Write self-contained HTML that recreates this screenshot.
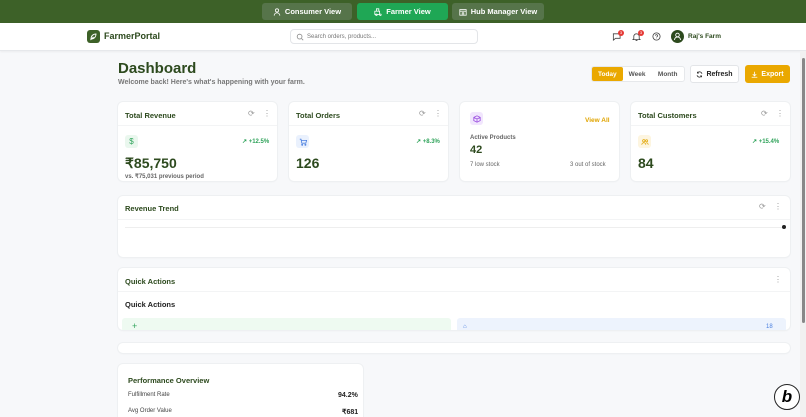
<!DOCTYPE html>
<html><head><meta charset="utf-8"><style>
*{box-sizing:border-box;margin:0;padding:0}
html,body{width:806px;height:417px;overflow:hidden}
body{background:#f7f8fa;font-family:"Liberation Sans",sans-serif;position:relative;color:#222}
.abs{position:absolute}
.top{left:0;top:0;width:806px;height:23px;background:#3d6128}
.tb{top:3px;height:17px;border-radius:3px;color:#fff;font-size:7.5px;font-weight:bold;display:flex;align-items:center;justify-content:center;gap:4px;background:#56744a}
.hdr{left:0;top:23px;width:806px;height:28px;background:#fff;border-bottom:1px solid #e6e8eb;box-shadow:0 1px 2px rgba(0,0,0,.05)}
.card{background:#fff;border-radius:5px;box-shadow:0 0 0 1px #eef0f2,0 1px 2px rgba(0,0,0,.04)}
.ct{font-size:7.5px;font-weight:bold;color:#2d4a1e}
.big{font-size:14px;font-weight:bold;color:#2d4a1e}
.g{color:#2fa35a;font-size:6px;font-weight:bold}
.ico{width:13px;height:13px;border-radius:3px;display:flex;align-items:center;justify-content:center;font-size:8px}
.sm{font-size:6px;color:#666}
.dots{font-size:8px;color:#999}
</style></head><body>
<div class="abs top"></div>
<div class="abs tb" style="left:262px;width:90px">
<svg width="8" height="8" viewBox="0 0 10 10" fill="none" stroke="#fff" stroke-width="1"><circle cx="5" cy="3" r="2"/><path d="M1.5 9.5c0-2 1.5-3.5 3.5-3.5s3.5 1.5 3.5 3.5"/></svg>Consumer View</div>
<div class="abs tb" style="left:357px;width:91px;background:#1fa755">
<svg width="8" height="8" viewBox="0 0 10 10" fill="none" stroke="#fff" stroke-width="1"><rect x="1" y="4" width="6" height="4"/><circle cx="3" cy="8.5" r="1"/><circle cx="8" cy="8.5" r="1"/><path d="M3 4V1h3v3"/></svg>Farmer View</div>
<div class="abs tb" style="left:452px;width:92px">
<svg width="8" height="8" viewBox="0 0 10 10" fill="none" stroke="#fff" stroke-width="1"><rect x="1" y="2" width="8" height="7"/><path d="M1 4h8M4 9V6h2v3"/></svg>Hub Manager View</div>

<div class="abs hdr"></div>
<div class="abs" style="left:87px;top:30px;width:13px;height:13px;background:#3d6128;border-radius:3px"><svg width="13" height="13" viewBox="0 0 13 13" fill="none" stroke="#fff" stroke-width="0.9"><path d="M4 9c0-3 2-5 5-5 0 3-2 5-5 5zM3.5 10l3-3"/></svg></div>
<div class="abs" style="left:104px;top:31px;font-size:9px;font-weight:bold;color:#2d4a1e">FarmerPortal</div>
<div class="abs" style="left:290px;top:29px;width:188px;height:15px;border:1px solid #e3e5e8;border-radius:4px;font-size:6px;color:#777;padding:4px 0 0 16px">Search orders, products...
<svg class="abs" style="left:5px;top:3px" width="8" height="8" viewBox="0 0 10 10" fill="none" stroke="#888" stroke-width="1"><circle cx="4.5" cy="4.5" r="3"/><path d="M7 7l2 2"/></svg></div>
<svg class="abs" style="left:612px;top:32px" width="9" height="9" viewBox="0 0 10 10" fill="none" stroke="#444" stroke-width="0.9"><path d="M1 2h8v5H4L1.5 9V2z"/></svg>
<div class="abs" style="left:618px;top:30px;width:6px;height:6px;border-radius:50%;background:#e53935;font-size:4px;color:#fff;text-align:center;line-height:6px">3</div>
<svg class="abs" style="left:632px;top:32px" width="9" height="9" viewBox="0 0 10 10" fill="none" stroke="#444" stroke-width="0.9"><path d="M2 7.5V5a3 3 0 016 0v2.5l1 1H1zM4 9.5h2"/></svg>
<div class="abs" style="left:638px;top:30px;width:6px;height:6px;border-radius:50%;background:#e53935;font-size:4px;color:#fff;text-align:center;line-height:6px">3</div>
<svg class="abs" style="left:652px;top:32px" width="9" height="9" viewBox="0 0 10 10" fill="none" stroke="#444" stroke-width="0.9"><circle cx="5" cy="5" r="4"/><path d="M3.8 4a1.2 1.2 0 112 1L5 6M5 7.5v.3"/></svg>
<div class="abs" style="left:671px;top:30px;width:13px;height:13px;border-radius:50%;background:#2d4a1e"><svg width="13" height="13" viewBox="0 0 13 13" fill="none" stroke="#fff" stroke-width="0.9"><circle cx="6.5" cy="5" r="1.8"/><path d="M3.5 10c0-1.7 1.3-3 3-3s3 1.3 3 3"/></svg></div>
<div class="abs" style="left:688px;top:33px;font-size:6.5px;font-weight:bold;color:#2d4a1e">Raj's Farm</div>

<div class="abs" style="left:800px;top:51px;width:6px;height:366px;background:#f1f1f1"></div>
<div class="abs" style="left:802px;top:58px;width:3px;height:265px;background:#888;border-radius:2px"></div>

<div class="abs" style="left:118px;top:60px;font-size:15px;font-weight:bold;color:#2d4a1e">Dashboard</div>
<div class="abs" style="left:118px;top:79px;font-size:7px;color:#777;font-weight:bold">Welcome back! Here's what's happening with your farm.</div>
<div class="abs" style="left:591px;top:66px;width:94px;height:16px;background:#fff;border:1px solid #e6e8eb;border-radius:3px;font-size:6.5px;font-weight:bold;color:#555;display:flex;align-items:center">
<div style="width:31px;height:100%;background:#eaa800;color:#fff;display:flex;align-items:center;justify-content:center;border-radius:2px">Today</div>
<div style="width:29px;text-align:center">Week</div><div style="width:33px;text-align:center">Month</div></div>
<div class="abs" style="left:690px;top:65px;width:49px;height:18px;background:#fff;border:1px solid #e3e5e8;border-radius:3px;font-size:7px;font-weight:bold;color:#222;display:flex;align-items:center;justify-content:center;gap:3px">
<svg width="7" height="7" viewBox="0 0 10 10" fill="none" stroke="#333" stroke-width="1.1"><path d="M8.5 4A3.5 3.5 0 002 3M1.5 6A3.5 3.5 0 008 7M2 1v2h2M8 9V7H6"/></svg>Refresh</div>
<div class="abs" style="left:745px;top:65px;width:45px;height:18px;background:#eaa800;border-radius:3px;font-size:7px;font-weight:bold;color:#fff;display:flex;align-items:center;justify-content:center;gap:3px">
<svg width="7" height="7" viewBox="0 0 10 10" fill="none" stroke="#fff" stroke-width="1.1"><path d="M5 1v6M2.5 4.5L5 7l2.5-2.5M1 9h8"/></svg>Export</div>

<div class="abs card" style="left:118px;top:102px;width:159px;height:79px">
<div class="abs ct" style="left:7px;top:9px">Total Revenue</div>
<div class="abs dots" style="left:130px;top:7px">⟳</div><div class="abs dots" style="left:145px;top:7px">⋮</div>
<div class="abs" style="left:0;top:23px;width:159px;border-top:1px solid #f3f4f5"></div>
<div class="abs ico" style="left:7px;top:33px;background:#eaf7ee;color:#2fa35a">$</div>
<div class="abs g" style="left:124px;top:36px">↗ +12.5%</div>
<div class="abs big" style="left:7px;top:53px">₹85,750</div>
<div class="abs sm" style="left:7px;top:71px;font-weight:bold">vs. ₹75,031 previous period</div></div>

<div class="abs card" style="left:289px;top:102px;width:159px;height:79px">
<div class="abs ct" style="left:7px;top:9px">Total Orders</div>
<div class="abs dots" style="left:130px;top:7px">⟳</div><div class="abs dots" style="left:145px;top:7px">⋮</div>
<div class="abs" style="left:0;top:23px;width:159px;border-top:1px solid #f3f4f5"></div>
<div class="abs ico" style="left:7px;top:33px;background:#eaf1fd"><svg width="8" height="8" viewBox="0 0 10 10" fill="none" stroke="#4a7fe0" stroke-width="1"><path d="M1 1.5h1.5l1 5h5l1-3.5H3"/><circle cx="4" cy="8.5" r=".7"/><circle cx="8" cy="8.5" r=".7"/></svg></div>
<div class="abs g" style="left:127px;top:36px">↗ +8.3%</div>
<div class="abs big" style="left:7px;top:53px">126</div></div>

<div class="abs card" style="left:460px;top:102px;width:159px;height:79px">
<div class="abs ico" style="left:10px;top:10px;background:#f1e6fd"><svg width="8" height="8" viewBox="0 0 10 10" fill="none" stroke="#9b4fe0" stroke-width="1"><path d="M5 1l4 2v4L5 9 1 7V3zM1 3l4 2 4-2M5 5v4"/></svg></div>
<div class="abs" style="left:125px;top:15px;font-size:6.5px;font-weight:bold;color:#e0a400">View All</div>
<div class="abs sm" style="left:10px;top:33px;font-weight:bold">Active Products</div>
<div class="abs" style="left:10px;top:42px;font-size:11px;font-weight:bold;color:#2d4a1e">42</div>
<div class="abs sm" style="left:10px;top:60px">7 low stock</div>
<div class="abs sm" style="left:110px;top:60px">3 out of stock</div></div>

<div class="abs card" style="left:631px;top:102px;width:159px;height:79px">
<div class="abs ct" style="left:7px;top:9px">Total Customers</div>
<div class="abs dots" style="left:130px;top:7px">⟳</div><div class="abs dots" style="left:145px;top:7px">⋮</div>
<div class="abs" style="left:0;top:23px;width:159px;border-top:1px solid #f3f4f5"></div>
<div class="abs ico" style="left:7px;top:33px;background:#fdf5e0"><svg width="8" height="8" viewBox="0 0 10 10" fill="none" stroke="#e0a400" stroke-width="0.9"><circle cx="3.5" cy="3.5" r="1.5"/><circle cx="7" cy="3.5" r="1.3"/><path d="M1 8.5c0-1.5 1-2.5 2.5-2.5S6 7 6 8.5M6.5 6c1.5 0 2.5 1 2.5 2.5"/></svg></div>
<div class="abs g" style="left:121px;top:36px">↗ +15.4%</div>
<div class="abs big" style="left:7px;top:53px">84</div></div>

<div class="abs card" style="left:118px;top:196px;width:672px;height:61px">
<div class="abs ct" style="left:7px;top:8px">Revenue Trend</div>
<div class="abs dots" style="left:641px;top:6px">⟳</div><div class="abs dots" style="left:656px;top:6px">⋮</div>
<div class="abs" style="left:0;top:23px;width:672px;border-top:1px solid #f3f4f5"></div>
<div class="abs" style="left:7px;top:31px;width:658px;border-top:1px solid #eee"></div>
<div class="abs" style="left:664px;top:29px;width:4px;height:4px;border-radius:50%;background:#222"></div></div>

<div class="abs card" style="left:118px;top:268px;width:672px;height:62px;overflow:hidden">
<div class="abs ct" style="left:7px;top:9px">Quick Actions</div>
<div class="abs dots" style="left:656px;top:7px">⋮</div>
<div class="abs" style="left:0;top:23px;width:672px;border-top:1px solid #f3f4f5"></div>
<div class="abs" style="left:7px;top:32px;font-size:7.5px;font-weight:bold;color:#222">Quick Actions</div>
<div class="abs" style="left:4px;top:50px;width:329px;height:20px;background:#eefaf1;border-radius:3px;color:#2fa35a;font-size:9px;padding:3px 0 0 10px">+</div>
<div class="abs" style="left:339px;top:50px;width:329px;height:20px;background:#edf3fd;border-radius:3px;color:#4a7fe0;font-size:6px;padding:6px 0 0 6px">⌂<span style="position:absolute;left:309px;top:6px">18</span></div></div>

<div class="abs card" style="left:118px;top:343px;width:672px;height:10px"></div>

<div class="abs card" style="left:118px;top:364px;width:245px;height:60px">
<div class="abs ct" style="left:10px;top:12px">Performance Overview</div>
<div class="abs sm" style="left:10px;top:28px;color:#444">Fulfillment Rate</div>
<div class="abs" style="left:220px;top:28px;font-size:7px;font-weight:bold">94.2%</div>
<div class="abs sm" style="left:10px;top:44px;color:#444">Avg Order Value</div>
<div class="abs" style="left:224px;top:44px;font-size:7px;font-weight:bold">₹681</div></div>

<div class="abs" style="left:774px;top:384px;width:26px;height:26px;border-radius:50%;background:#fff;border:1px solid #222;font-size:17px;font-weight:bold;font-style:italic;text-align:center;line-height:24px;color:#000">b</div>
</body></html>
